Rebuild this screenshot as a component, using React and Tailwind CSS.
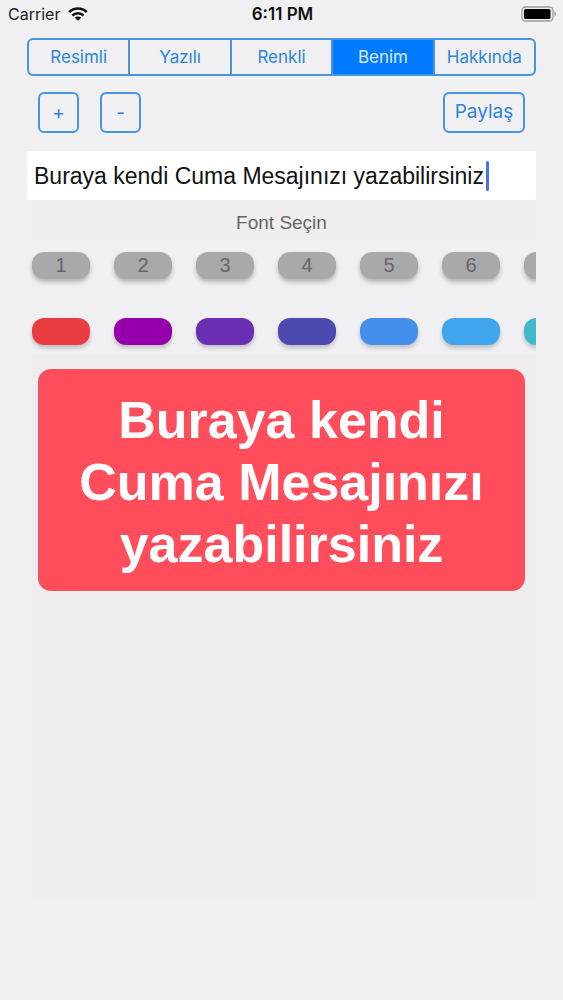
import { useState } from 'react'
import clsx from 'clsx'

const tabs = ['Resimli', 'Yazılı', 'Renkli', 'Benim', 'Hakkında']

const fonts = ['1', '2', '3', '4', '5', '6', '']

const colors = [
  { name: 'Kırmızı', className: 'bg-[#ea3d42]' },
  { name: 'Mor', className: 'bg-[#9600ab]' },
  { name: 'Eflatun', className: 'bg-[#692eb2]' },
  { name: 'Çivit', className: 'bg-[#4c49af]' },
  { name: 'Mavi', className: 'bg-[#448fec]' },
  { name: 'Açık mavi', className: 'bg-[#41a5ed]' },
  { name: 'Turkuaz', className: 'bg-[#41b9cd]' },
]

function WifiIcon() {
  return (
    <svg viewBox="0 0 20 14" className="w-5 h-3.5" fill="none" stroke="#111" strokeWidth="2.5" aria-hidden="true">
      <path d="M1.2 5.1a12.6 12.6 0 0 1 17.6 0" />
      <path d="M4.4 8.5a8 8 0 0 1 11.2 0" />
      <path d="M10 13.8 6.8 10.7a4.6 4.6 0 0 1 6.4 0Z" fill="#111" stroke="none" />
    </svg>
  )
}

function BatteryIcon() {
  return (
    <svg viewBox="0 0 36 16" className="w-9 h-4" aria-hidden="true">
      <rect x="1" y="1" width="31" height="14" rx="3.5" fill="none" stroke="#9b9b9d" strokeWidth="1.3" />
      <rect x="3" y="3" width="26.5" height="10" rx="1.5" fill="#000" />
      <path d="M33.5 5.5c1.6.6 1.6 4.4 0 5Z" fill="#8b8b8d" />
    </svg>
  )
}

function StatusBar() {
  return (
    <header className="grid grid-cols-3 items-center h-7 pl-2 pr-1.5 text-[17px] leading-7 text-[#222]">
      <div className="flex items-center gap-2 text-base leading-7">
        Carrier
        <WifiIcon />
      </div>
      <p className="text-center font-semibold text-[#111]">6:11 PM</p>
      <div className="flex justify-end">
        <BatteryIcon />
      </div>
    </header>
  )
}

export default function App() {
  const [active, setActive] = useState('Benim')
  const [message, setMessage] = useState('Buraya kendi Cuma Mesajınızı yazabilirsiniz')
  const [size, setSize] = useState(52)

  const outline = 'h-[41px] rounded-md border-2 border-[#4795e2] text-[#2b85dc]'

  return (
    <div className="flex flex-col min-h-screen pb-[100px] bg-[#f0eff1] font-['Inter',sans-serif]">
      <StatusBar />

      <main className="flex flex-col flex-1 mx-[27px] mt-2.5">
        {/* Tabs */}
        <nav className="flex h-[38px] rounded-md border-2 border-[#4795e2] overflow-hidden divide-x-2 divide-[#4795e2]">
          {tabs.map((tab) => (
            <button
              key={tab}
              onClick={() => setActive(tab)}
              className={clsx('flex-1 basis-0 pt-0.5 text-[17px]', active === tab ? 'bg-[#007aff] text-[#d5eaff]' : 'text-[#2b85dc]')}
            >
              {tab}
            </button>
          ))}
        </nav>

        {/* Text size and share */}
        <div className="flex items-center mt-4 px-[11px]">
          <button onClick={() => setSize(size + 2)} className={clsx(outline, 'w-[41px] pt-0.5 text-[19px]')}>+</button>
          <button onClick={() => setSize(size - 2)} className={clsx(outline, 'w-[41px] ml-[21px] pt-0.5 text-[19px]')}>-</button>
          <button className={clsx(outline, 'w-[82px] ml-auto text-[19px]')}>Paylaş</button>
        </div>

        {/* Message */}
        <label className="flex items-center h-[49px] mt-[18px] pl-[7px] bg-white rounded-xs overflow-hidden font-['Liberation_Sans',sans-serif]">
          <input
            aria-label="Mesaj"
            value={message}
            onChange={(e) => setMessage(e.target.value)}
            className="field-sizing-content pt-0.5 text-[23px] text-[#111] caret-transparent outline-none"
          />
          <span className="w-[3px] h-[30px] ml-0.5 rounded-full bg-[#4e6fe0]" />
        </label>

        <div className="ml-[5px] bg-[#efedf0] font-['Liberation_Sans',sans-serif]">
          <p className="h-10 pt-2 pr-[5px] text-center text-[19px] leading-[30px] text-[#666]">Font Seçin</p>
        </div>

        {/* Fonts */}
        <div className="flex gap-6 pl-[5px] pt-3 h-[66px] overflow-hidden font-['Liberation_Sans',sans-serif]">
          {fonts.map((n, i) => (
            <button
              key={i}
              aria-label={`Font ${i + 1}`}
              className="shrink-0 w-[58px] h-[27px] rounded-xl bg-[#a9a8aa] text-[20px] leading-[27px] text-[#666] shadow-[0_3px_4px_rgba(0,0,0,0.25)]"
            >
              {n}
            </button>
          ))}
        </div>

        {/* Colors */}
        <div className="flex gap-6 pl-[5px] pt-3 h-12 overflow-hidden">
          {colors.map((c) => (
            <button key={c.name} aria-label={c.name} className={clsx('shrink-0 w-[58px] h-[27px] rounded-xl shadow-[0_3px_4px_rgba(0,0,0,0.2)]', c.className)} />
          ))}
        </div>

        {/* Preview */}
        <section className="flex-1 ml-[5px] pt-[15px] pl-1.5 pr-[11px] bg-[#efedf0]">
          <p
            className="px-8 pt-5 pb-4 rounded-[13px] bg-[#ff4d5b] text-center font-bold leading-[62px] text-white font-['Liberation_Sans',sans-serif]"
            style={{ fontSize: size }}
          >
            {message}
          </p>
        </section>
      </main>
    </div>
  )
}
